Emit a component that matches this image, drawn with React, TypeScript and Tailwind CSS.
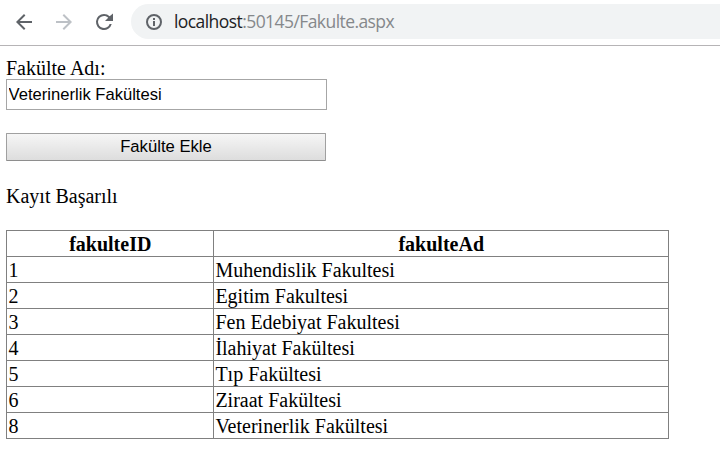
import React from "react";

const rows: [string, string][] = [
  ["1", "Muhendislik Fakultesi"],
  ["2", "Egitim Fakultesi"],
  ["3", "Fen Edebiyat Fakultesi"],
  ["4", "İlahiyat Fakültesi"],
  ["5", "Tıp Fakültesi"],
  ["6", "Ziraat Fakültesi"],
  ["8", "Veterinerlik Fakültesi"],
];

function Toolbar() {
  return (
    <header className="flex h-[46px] items-start border-b border-[#b6b4b6] bg-white pt-[4px]">
      <div className="flex h-[35px] w-[131px] shrink-0 items-center gap-[16px] pl-[12px]">
        <svg className="size-6" viewBox="0 0 24 24" fill="#5f6368">
          <path d="M20 11H7.83l5.59-5.59L12 4l-8 8 8 8 1.41-1.41L7.83 13H20v-2z" />
        </svg>
        <svg className="size-6" viewBox="0 0 24 24" fill="#bdc1c6">
          <path d="M12 4l-1.41 1.41L16.17 11H4v2h12.17l-5.58 5.59L12 20l8-8z" />
        </svg>
        <svg className="size-6" viewBox="0 0 24 24" fill="#5f6368">
          <path d="M17.65 6.35A7.958 7.958 0 0012 4a8 8 0 107.73 10h-2.08A6 6 0 1112 6c1.66 0 3.14.69 4.22 1.78L13 11h8V3.5l-3.35 2.85z" />
        </svg>
      </div>
      <div className="flex h-[35px] flex-1 items-center rounded-l-full bg-[#f1f3f4] pl-[14px]">
        <svg className="size-[18px]" viewBox="0 0 18 18" fill="none" stroke="#5f6368" strokeWidth="2">
          <circle cx="9" cy="9" r="7" />
          <path d="M9 8v5M9 5v2" />
        </svg>
        <span className="ml-[11px] font-['Open_Sans',sans-serif] text-[17.5px] tracking-[-0.57px] text-[#202124]">
          localhost<span className="text-[#85888b]">:50145/Fakulte.aspx</span>
        </span>
      </div>
    </header>
  );
}

export default function App() {
  return (
    <div className="h-[461px] w-[720px] overflow-hidden bg-white font-['Liberation_Serif',serif] text-[20px] leading-[23px] text-black">
      <Toolbar />
      <main className="pl-[6px] pt-[10px]">
        <label className="block h-[23px] leading-[25px]">Fakülte Adı:</label>
        <input
          className="block h-[31px] w-[321px] border border-[#a6a6a6] px-[1.6px] font-['Liberation_Sans',sans-serif] text-[16.6px] outline-none"
          defaultValue="Veterinerlik Fakültesi"
        />
        <button className="mt-[23px] block h-[28px] w-[320px] rounded-[1px] border border-[#a0a0a0] border-b-[#8e8e8e] bg-linear-to-b from-[#f6f6f6] to-[#dddddd] font-['Liberation_Sans',sans-serif] text-[16.67px] leading-[26px]">
          Fakülte Ekle
        </button>
        <p className="mt-[23px] h-[23px] leading-[25px]">Kayıt Başarılı</p>
        <table className="mt-[23px] w-[663px] table-fixed border-collapse border border-[#808080]">
          <colgroup>
            <col className="w-[207px]" />
            <col />
          </colgroup>
          <thead>
            <tr className="h-[26px]">
              <th className="border border-[#808080] pt-[2px] pr-0 pb-0 pl-[0.5px]">fakulteID</th>
              <th className="border border-[#808080] pt-[2px] pr-0 pb-0 pl-[0.5px]">fakulteAd</th>
            </tr>
          </thead>
          <tbody>
            {rows.map(([id, name]) => (
              <tr key={id} className="h-[26px]">
                <td className="border border-[#808080] pt-[2px] pr-0 pb-0 pl-[1.4px]">{id}</td>
                <td className="border border-[#808080] pt-[2px] pr-0 pb-0 pl-[1.4px]">{name}</td>
              </tr>
            ))}
          </tbody>
        </table>
      </main>
    </div>
  );
}
